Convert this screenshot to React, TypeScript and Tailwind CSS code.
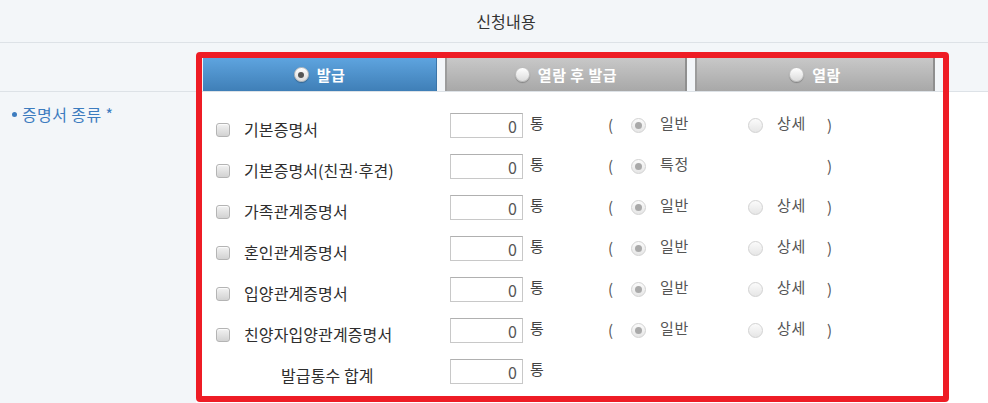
import React from "react";

const font = { fontFamily: '"Noto Sans CJK KR", "Noto Sans", sans-serif' };

function TabRadio({ checked }: { checked: boolean }) {
  return (
    <span className="relative inline-flex h-[15px] w-[15px] items-center justify-center rounded-full border border-[#bdbdbd] bg-gradient-to-b from-[#ffffff] to-[#dcdcdc] shadow-[0_1px_1px_rgba(0,0,0,0.25)]">
      {checked && <span className="h-[6px] w-[6px] rounded-full bg-[#555]" />}
    </span>
  );
}

function Radio({ checked }: { checked: boolean }) {
  return (
    <span className="mt-[5px] inline-flex h-[15px] w-[15px] shrink-0 items-center justify-center rounded-full border border-[#d2d2d2] bg-gradient-to-b from-[#fbfbfb] to-[#e6e6e6]">
      {checked && <span className="h-[7px] w-[7px] rounded-full bg-[#a9a9a9]" />}
    </span>
  );
}

function Checkbox() {
  return (
    <span className="mt-[10px] inline-block h-[14px] w-[14px] shrink-0 rounded-[3px] border border-[#b4b4b4] bg-gradient-to-b from-[#f2f2f2] to-[#d2d2d2] shadow-[inset_0_1px_1px_rgba(255,255,255,0.8)]" />
  );
}

function Qty() {
  return (
    <div className="flex h-[25px] w-[73px] shrink-0 items-center justify-end border border-[#c8c8c8] border-t-[#b0b0b0] bg-white pr-[5px] text-[16px] leading-none text-[#555]">
      0
    </div>
  );
}

function Label({ text }: { text: string }) {
  if (text.includes("·")) {
    const [a, b] = text.split("·");
    return (
      <>
        {a}
        <span style={{ fontFamily: '"Liberation Sans", sans-serif' }}>·</span>
        {b}
      </>
    );
  }
  return <>{text}</>;
}

const rows: { label: string; opts: string[] }[] = [
  { label: "기본증명서", opts: ["일반", "상세"] },
  { label: "기본증명서(친권·후견)", opts: ["특정"] },
  { label: "가족관계증명서", opts: ["일반", "상세"] },
  { label: "혼인관계증명서", opts: ["일반", "상세"] },
  { label: "입양관계증명서", opts: ["일반", "상세"] },
  { label: "친양자입양관계증명서", opts: ["일반", "상세"] },
];

export default function App() {
  return (
    <div
      className="relative h-[403px] w-[988px] overflow-hidden bg-[#f3f6f9] text-[#333]"
      style={font}
    >
      {/* header */}
      <div className="flex h-[43px] items-center justify-center border-b border-[#dde2e7] pl-[24px] text-[16px] leading-[20px] tracking-[0.2px] text-[#333]">
        신청내용
      </div>

      {/* tabs row */}
      <div className="flex h-[49px] border-b border-[#dde2e7] pt-[15px]">
        <div className="w-[203px] shrink-0" />
        <div className="flex h-[33px]">
          <div className="flex w-[234px] items-center justify-center gap-[8px] border-r border-[#3a74a8] bg-gradient-to-b from-[#5ea4df] to-[#3f7fb7] text-[15px] font-bold leading-[20px] tracking-[0.5px] text-white">
            <TabRadio checked />
            <span>발급</span>
          </div>
          <div className="ml-[8px] flex w-[242px] items-center justify-center gap-[8px] border-l-2 border-r-2 border-l-[#9c9c9c] border-r-[#8f8f8f] bg-gradient-to-b from-[#c8c8c8] to-[#a8a8a8] text-[15px] font-bold leading-[20px] tracking-[0.5px] text-white">
            <TabRadio checked={false} />
            <span>열람 후 발급</span>
          </div>
          <div className="ml-[8px] flex w-[240px] items-center justify-center gap-[8px] border-l-2 border-r-2 border-l-[#9c9c9c] border-r-[#8f8f8f] bg-gradient-to-b from-[#c8c8c8] to-[#a8a8a8] text-[15px] font-bold leading-[20px] tracking-[0.5px] text-white">
            <TabRadio checked={false} />
            <span>열람</span>
          </div>
        </div>
      </div>

      {/* body */}
      <div className="flex h-[311px]">
        <div className="w-[196px] shrink-0 bg-[#f3f6f9] pl-[12px] pt-[12px]">
          <div className="flex items-center text-[16px] leading-[20px] tracking-[0.4px] text-[#3d7cbf]">
            <span className="mr-[5px] inline-block h-[5px] w-[5px] rounded-full bg-[#3d7cbf]" />
            <span>증명서 종류 *</span>
          </div>
        </div>
        <div className="flex-1 bg-white pl-[20px] pt-[21px]">
          {rows.map((r) => (
            <div key={r.label} className="flex h-[41px] items-start">
              <div className="flex w-[234px] shrink-0 items-start">
                <Checkbox />
                <span className="ml-[14px] mt-[6px] text-[16px] leading-[20px] tracking-[0.1px] text-[#2e2e2e]">
                  <Label text={r.label} />
                </span>
              </div>
              <Qty />
              <div className="w-[85px] shrink-0 pl-[7px] text-[15px] leading-[20px] text-[#444]">
                통
              </div>
              <div className="mt-[2px] w-[23px] shrink-0 text-[15px] leading-[20px] text-[#555]">
                (
              </div>
              <div className="flex w-[117px] shrink-0 items-start">
                <Radio checked />
                <span className="ml-[14px] text-[15px] leading-[20px] tracking-[0.6px] text-[#555]">
                  {r.opts[0]}
                </span>
              </div>
              <div className="flex w-[79px] shrink-0 items-start">
                {r.opts[1] && (
                  <>
                    <Radio checked={false} />
                    <span className="ml-[14px] text-[15px] leading-[20px] tracking-[0.6px] text-[#555]">
                      {r.opts[1]}
                    </span>
                  </>
                )}
              </div>
              <div className="mt-[2px] text-[15px] leading-[20px] text-[#555]">)</div>
            </div>
          ))}
          <div className="flex h-[41px] items-start">
            <div className="w-[234px] shrink-0 pl-[65px]">
              <span className="mt-[6px] block text-[16px] leading-[20px] tracking-[0.1px] text-[#2e2e2e]">
                발급통수 합계
              </span>
            </div>
            <Qty />
            <div className="w-[85px] shrink-0 pl-[7px] text-[15px] leading-[20px] text-[#444]">
              통
            </div>
          </div>
        </div>
      </div>

      {/* red highlight overlay */}
      <div className="pointer-events-none absolute left-[196px] top-[52px] h-[350px] w-[753px] rounded-[4px] border-[6px] border-[#ee1c25]" />
    </div>
  );
}
